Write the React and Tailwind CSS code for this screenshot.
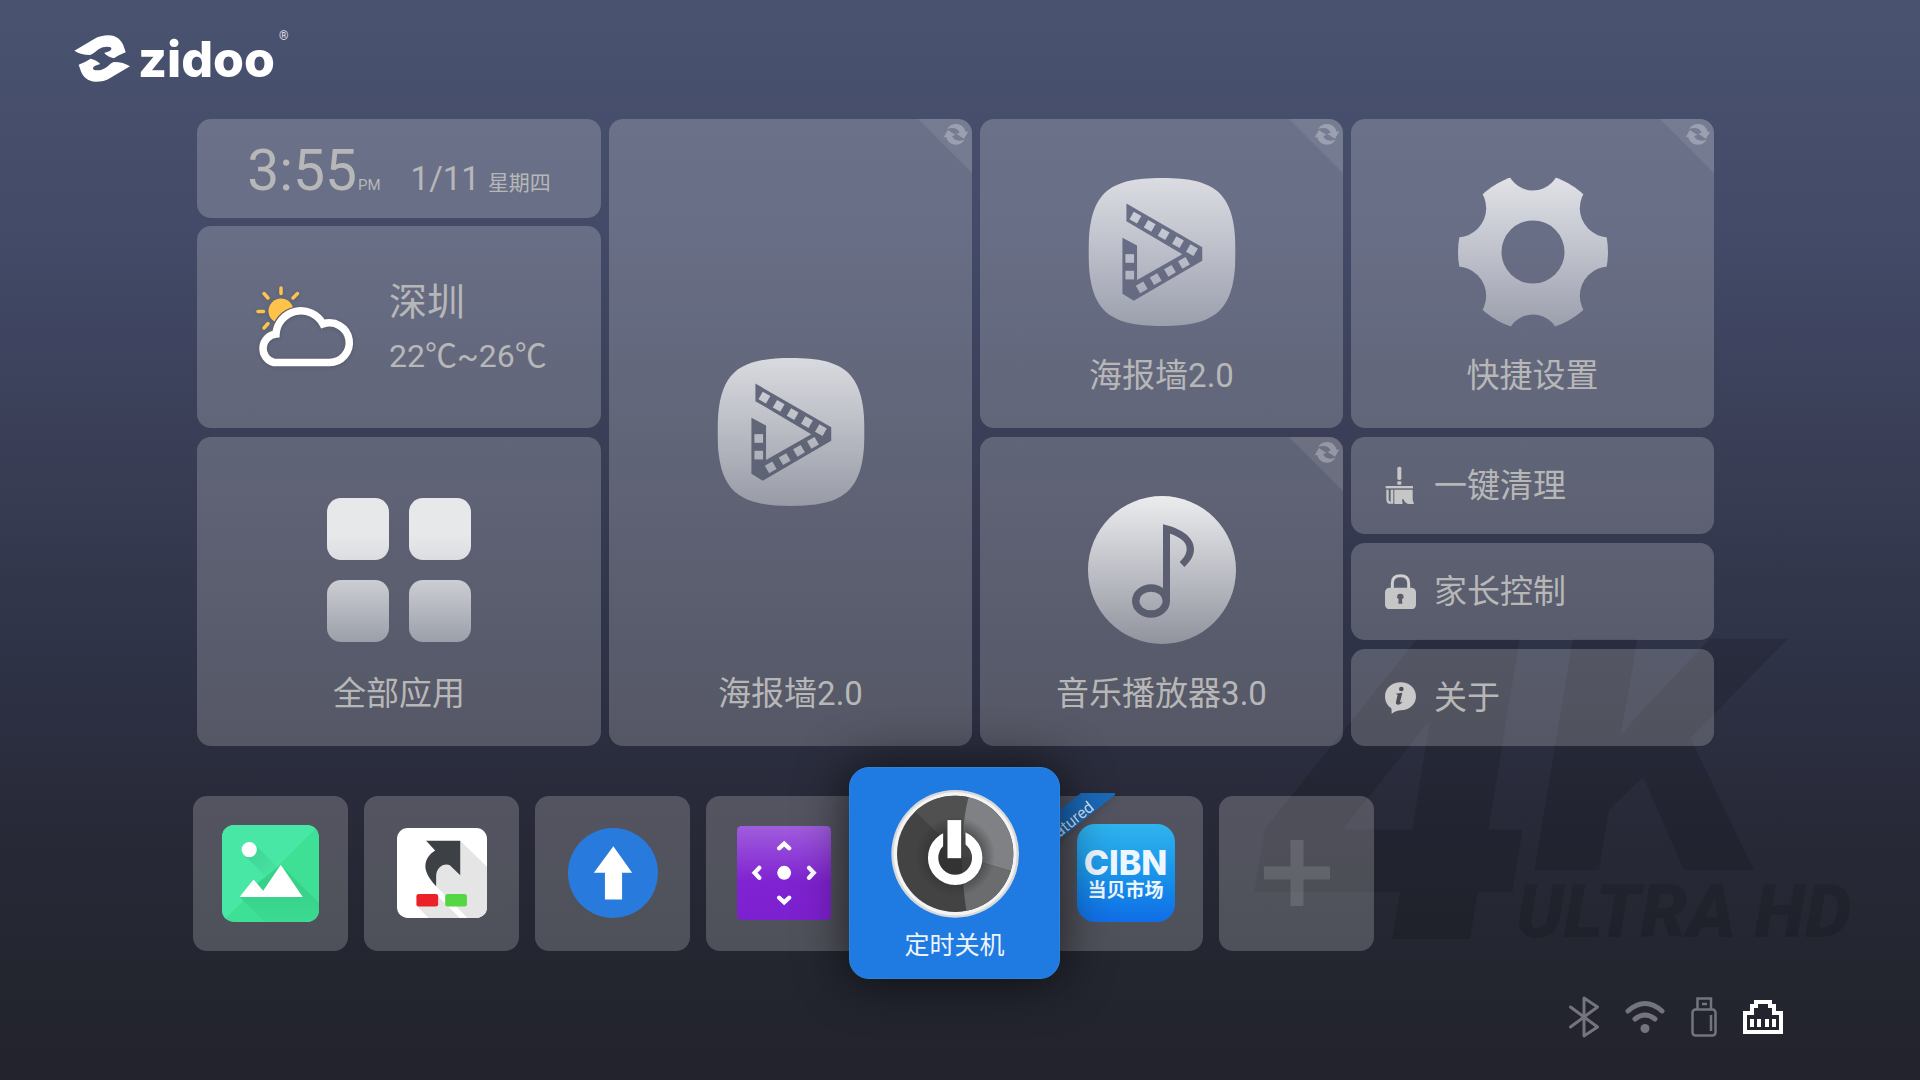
// App.jsx
import React, { useId } from 'react';

// Upper blade of the brand mark, the lower one is the same shape turned by 180deg
const BLADE = 'M41 90 L95 56 C108 47 122 44 136 44 C158 44 174 58 180 82 L184 95 L165 104 L151 113 Q136 110 124 97 L138 92 Q148 86 142 80 Q134 76 120 80 C102 86 96 102 84 103 Q60 103 41 90 Z';

const ZidooLogo = () => (
  <div className="flex items-start text-white">
    <svg className="mt-[15px] h-[47px] w-[56px]" viewBox="40 43 156 141" preserveAspectRatio="none" fill="currentColor" aria-hidden="true">
      <path d={BLADE} />
      <path d={BLADE} transform="rotate(180 118.5 113.5)" />
    </svg>
    <span className="ml-2 mt-[14px] font-[Inter,sans-serif] text-[50px] font-extrabold leading-[50px]">zidoo</span>
    <span className="ml-1 mt-2 text-xs leading-4 text-white/80">®</span>
  </div>
);

const Fade = ({ id, from, to }) => (
  <linearGradient id={id} x1="0" y1="0" x2="0" y2="1">
    <stop offset="0" stopColor="#fff" stopOpacity={from} />
    <stop offset="1" stopColor="#fff" stopOpacity={to} />
  </linearGradient>
);

const PosterIcon = () => {
  const id = useId();
  const upper = [[495, 322], [538, 347], [580, 372], [623, 396], [665, 420]];
  const lower = [[514, 532], [556, 507], [599, 482], [641, 458]];

  return (
    <svg className="size-[148px]" viewBox="353 203 444 445" aria-hidden="true">
      <defs>
        <Fade id={`${id}f`} from={0.76} to={0.36} />
        <mask id={`${id}m`} maskUnits="userSpaceOnUse" x="353" y="203" width="444" height="445">
          <rect x="353" y="203" width="444" height="445" fill="#fff" />
          <path d="M468 280 L696 411 V452 L490 572 L456 551 V383 L500 406 V510 L636 432 L468 333 Z" fill="#000" />
          {upper.map(([x, y]) => (
            <rect key={x} x={x - 13} y={y - 13} width="26" height="26" fill="#fff" transform={`rotate(30 ${x} ${y})`} />
          ))}
          {lower.map(([x, y]) => (
            <rect key={x} x={x - 13} y={y - 13} width="26" height="26" fill="#fff" transform={`rotate(-30 ${x} ${y})`} />
          ))}
          <rect x="465" y="432" width="26" height="26" fill="#fff" />
          <rect x="465" y="482" width="26" height="26" fill="#fff" />
        </mask>
      </defs>
      <path
        d="M575 203 C740 203 796 250 796 425 C796 600 740 648 575 648 C410 648 354 600 354 425 C354 250 410 203 575 203 Z"
        fill={`url(#${id}f)`}
        mask={`url(#${id}m)`}
      />
    </svg>
  );
};

const GearIcon = () => {
  const sides = [[347, 294], [805, 294], [347, 558], [805, 558]];

  return (
    <svg className="size-[150px]" viewBox="350 200 452 452" aria-hidden="true">
      <defs>
        <Fade id="gearFade" from={0.8} to={0.36} />
        <mask id="gearMask" maskUnits="userSpaceOnUse" x="350" y="200" width="452" height="452">
          <ellipse cx="576" cy="426" rx="226" ry="235" fill="#fff" />
          <circle cx="576" cy="426" r="95" fill="#000" />
          <circle cx="576" cy="161" r="80" fill="#000" />
          <circle cx="576" cy="693" r="79" fill="#000" />
          {sides.map(([x, y]) => (
            <circle key={`${x}-${y}`} cx={x} cy={y} r="88" fill="#000" />
          ))}
        </mask>
      </defs>
      <rect x="350" y="200" width="452" height="452" fill="url(#gearFade)" mask="url(#gearMask)" />
    </svg>
  );
};

const MusicIcon = () => (
  <svg className="size-[148px]" viewBox="351 197 444 444" aria-hidden="true">
    <defs>
      <Fade id="musicFade" from={0.88} to={0.34} />
      <mask id="musicMask" maskUnits="userSpaceOnUse" x="351" y="197" width="444" height="444">
        <rect x="351" y="197" width="444" height="444" fill="#fff" />
        <path d="M576 282 C620 292 669 315 669 357 C669 380 655 396 640 410 L626 395 C638 382 647 372 647 355 C647 332 622 318 597 310 V512 H576 Z" fill="#000" />
        <ellipse cx="540" cy="512" rx="46" ry="39" fill="none" stroke="#000" strokeWidth="22" />
      </mask>
    </defs>
    <circle cx="573" cy="419" r="222" fill="url(#musicFade)" mask="url(#musicMask)" />
  </svg>
);

const AllAppsIcon = () => (
  <div className="grid grid-cols-2 gap-5">
    <span className="size-[62px] rounded-[14px] bg-linear-to-b from-[#e7e8ea] from-60% to-[#dcdde1]" />
    <span className="size-[62px] rounded-[14px] bg-linear-to-b from-[#e7e8ea] from-60% to-[#dcdde1]" />
    <span className="size-[62px] rounded-[14px] bg-linear-to-b from-[#cdced3] to-[#9b9fa9]" />
    <span className="size-[62px] rounded-[14px] bg-linear-to-b from-[#cdced3] to-[#9b9fa9]" />
  </div>
);

const WeatherIcon = () => {
  const cloud = 'M18 76.5 A14.5 14.5 0 0 1 20 48 A25 25 0 0 1 67 38 A19.8 19.8 0 1 1 73 76.5 Z';

  return (
    <svg className="h-[82px] w-[97px] overflow-visible drop-shadow-sm" viewBox="0 0 97 82" fill="none" aria-hidden="true">
      <mask id="sunMask" maskUnits="userSpaceOnUse" x="-5" y="-5" width="60" height="60">
        <rect x="-5" y="-5" width="60" height="60" fill="#fff" />
        <path d={cloud} fill="#000" stroke="#000" strokeWidth="10" />
      </mask>
      <circle cx="25" cy="25" r="12.5" fill="#ffc34a" mask="url(#sunMask)" />
      <path d="M25 2 V7.500 M41.500 7.500 L37 12 M8 7.500 L12 12 M2 25.500 H7.500 M8 42 L12 37.500" stroke="#ffc34a" strokeWidth="3.500" strokeLinecap="round" />
      <path d={cloud} stroke="#fff" strokeWidth="7.500" />
    </svg>
  );
};

const SyncCorner = () => {
  const arrow = 'M1045 54 C1056 34 1092 32 1100 62 L1108 61 L1095 83 L1072 68 L1082 65 C1078 53 1064 47 1045 54 Z';

  return (
    <svg className="absolute right-0 top-0 size-[54px]" viewBox="958 24 161 161" fill="#fff" aria-hidden="true">
      <path d="M958 24 H1119 V185 Z" fillOpacity="0.08" />
      <g fillOpacity="0.28">
        <path d={arrow} />
        <path d={arrow} transform="rotate(180 1071 70)" />
      </g>
    </svg>
  );
};

const BroomIcon = () => (
  <svg className="w-[31px]" viewBox="135 105 93 118" fill="#c6c6c6" aria-hidden="true">
    <rect x="172" y="107" width="12" height="40" rx="5" />
    <rect x="172" y="151" width="12" height="10" rx="3" />
    <rect x="137" y="165" width="82" height="7" />
    <path d="M139 176 H146 V206 Q148 213 152 212 V176 H160 V218 H146 Q138 214 139 200 Z M163 176 H218 V206 L222 219 H204 Q192 214 191 204 L186 206 L188 219 H163 Z" />
  </svg>
);

const LockIcon = () => (
  <svg className="w-[31px]" viewBox="135 425 93 107" aria-hidden="true">
    <path d="M157 470 V452 Q157 430 181 430 Q206 430 206 452 V470" fill="none" stroke="#cfcfcf" strokeWidth="9" />
    <rect x="135" y="466" width="93" height="65" rx="14" fill="#c6c6c6" />
    <path d="M181 484 a9 9 0 0 1 5 17 l1 13 h-12 l1 -13 a9 9 0 0 1 5 -17 Z" fill="#5a5c6a" />
  </svg>
);

const InfoIcon = () => (
  <svg className="w-[31px]" viewBox="135 752 93 96" aria-hidden="true">
    <path d="M182 753 C208 753 228 771 228 795 C228 820 208 837 182 837 Q172 837 155 847 Q155 838 154 831 C142 823 135 811 135 795 C135 771 156 753 182 753 Z" fill="#c9c9c9" />
    <circle cx="184" cy="773" r="7" fill="#4c4e59" />
    <path d="M167 787 L187 784 L180 813 Q183 814 187 810 Q184 820 175 820 Q166 820 168 811 L173 791 Z" fill="#4c4e59" />
  </svg>
);

const GalleryIcon = () => (
  <svg className="size-[97px]" viewBox="124 135 292 292" aria-hidden="true">
    <defs>
      <clipPath id="galleryClip">
        <rect x="124" y="135" width="292" height="292" rx="36" />
      </clipPath>
      <linearGradient id="galleryDot" x1="0" y1="0" x2="1" y2="1">
        <stop offset="0" stopColor="#3fcf92" />
        <stop offset="1" stopColor="#47e6a3" />
      </linearGradient>
      <linearGradient id="galleryHill" x1="0" y1="0" x2="0" y2="1">
        <stop offset="0.400" stopColor="#38d18a" />
        <stop offset="1" stopColor="#3cdb91" />
      </linearGradient>
    </defs>
    <g clipPath="url(#galleryClip)">
      <rect x="124" y="135" width="292" height="292" fill="#3ee095" />
      <path d="M124 135 H416 L124 427 Z" fill="#48e7a5" />
      <path d="M222 193 L292 263 L262 295 L190 225 Z" fill="url(#galleryDot)" />
      <path d="M177 352 L252 427 H416 V370 L301 255 Z" fill="url(#galleryHill)" />
    </g>
    <circle cx="206" cy="209" r="23" fill="#fff" />
    <path d="M177 352 L219 299 L248 333 L301 255 L367 352 Z" fill="#fff" />
  </svg>
);

const ShortcutIcon = () => (
  <svg className="size-[90px]" viewBox="648 146 269 269" aria-hidden="true">
    <clipPath id="shortcutClip">
      <rect x="648" y="146" width="269" height="269" rx="32" />
    </clipPath>
    <g clipPath="url(#shortcutClip)">
      <rect x="648" y="146" width="269" height="269" fill="#fff" />
      <path d="M837 184 L917 262 V415 H859 L765 320 V250 Z M706 378 L742 415 H836 L771 350 Z" fill="#e5e5e5" />
    </g>
    <path d="M735 184 H837 V287 L806 257 C785 250 765 266 765 290 V320 C742 296 731 274 733 255 C735 236 748 222 762 213 Z" fill="#3d4146" />
    <rect x="706" y="343" width="65" height="38" rx="7" fill="#ea2227" />
    <rect x="792" y="343" width="65" height="38" rx="7" fill="#55d745" />
  </svg>
);

const UploadIcon = () => (
  <svg className="size-[90px]" viewBox="1162 144 268 268" aria-hidden="true">
    <circle cx="1296" cy="278" r="134" fill="#287bdd" />
    <path d="M1297 198 L1353 277 H1323 V357 H1272 V277 H1239 Z" fill="#fff" />
  </svg>
);

const DpadIcon = () => (
  <svg className="size-[94px]" viewBox="137 231 283 283" aria-hidden="true">
    <linearGradient id="dpadFade" x1="0" y1="0" x2="0" y2="1">
      <stop offset="0" stopColor="#a05ddd" />
      <stop offset="0.600" stopColor="#7f22d1" />
      <stop offset="1" stopColor="#7d20cf" />
    </linearGradient>
    <rect x="137" y="231" width="283" height="283" rx="14" fill="url(#dpadFade)" />
    <circle cx="279" cy="372" r="21" fill="#fff" />
    <path d="M264 298 L279 284 L294 298 M264 447 L279 461 L294 447 M204 357 L190 372 L204 387 M354 357 L368 372 L354 387" fill="none" stroke="#fff" strokeWidth="13" strokeLinecap="round" />
  </svg>
);

const PowerIcon = () => (
  <svg className="size-[128px]" viewBox="603 120 383 383" aria-hidden="true">
    <defs>
      <clipPath id="powerFace">
        <circle cx="795" cy="311" r="174" />
      </clipPath>
      <clipPath id="powerGap">
        <path d="M690 220 H759 V300 H826 V220 H900 V420 H690 Z" />
      </clipPath>
      <radialGradient id="powerShade" gradientUnits="userSpaceOnUse" cx="795" cy="318" r="120">
        <stop offset="0.500" stopColor="#2e2e2e" stopOpacity="0.75" />
        <stop offset="1" stopColor="#2e2e2e" stopOpacity="0" />
      </radialGradient>
    </defs>
    <circle cx="795" cy="311" r="191" fill="#d9d9d9" />
    <circle cx="795" cy="311" r="184" fill="#f4f4f4" />
    <g clipPath="url(#powerFace)">
      <rect x="603" y="120" width="383" height="383" fill="#434344" />
      <path d="M815 318 L650 160 L700 120 H838 Z" fill="#505051" />
      <path d="M815 318 Q815 210 840 120 H986 V370 Z" fill="#7f8184" />
      <path d="M815 318 L986 370 V503 H832 Q816 410 815 318 Z" fill="#6b6c6e" />
      <circle cx="795" cy="318" r="120" fill="url(#powerShade)" />
    </g>
    <circle cx="795" cy="323" r="66" fill="none" stroke="#fff" strokeWidth="31" clipPath="url(#powerGap)" />
    <rect x="772" y="210" width="41" height="114" fill="#fff" />
  </svg>
);

const CibnIcon = () => (
  <div className="flex size-[98px] flex-col items-center justify-center rounded-[18px] bg-linear-to-b from-[#2fb4ee] via-[#1a94ea] to-[#126de6] pt-1 text-[#eef7ff]">
    <span className="font-[Inter,sans-serif] text-[34px] font-extrabold leading-8">CIBN</span>
    <span className="text-[19px] font-bold leading-6">当贝市场</span>
  </div>
);

const FeaturedRibbon = () => (
  <svg className="absolute -left-[3px] -top-[3px] h-[64px] w-[70px] drop-shadow-md" viewBox="0 0 70 64" aria-hidden="true">
    <path d="M36 0 H70 V2 L0 58 V28 Z" fill="#1a69b8" />
    <text x="50" y="16" transform="rotate(-39 50 16)" textAnchor="end" fontFamily="'Liberation Sans Narrow', Roboto, sans-serif" fontSize="16" fill="#d5e4f4">Featured</text>
  </svg>
);

const PlusIcon = () => (
  <svg className="size-[66px]" viewBox="0 0 66 66" fill="#fff" fillOpacity="0.12" aria-hidden="true">
    <path d="M26.500 0 H39.500 V26.500 H66 V39.500 H39.500 V66 H26.500 V39.500 H0 V26.500 H26.500 Z" />
  </svg>
);

const Watermark = () => (
  <svg className="absolute bottom-0 right-0 h-[480px] w-[720px]" viewBox="1200 600 720 480" aria-hidden="true">
    <g opacity="0.12" fontFamily="Inter, sans-serif" fontStyle="italic" fontWeight="900">
      <text x="1248" y="939" fontSize="412">4</text>
      <text x="1534" y="870" fontSize="318">K</text>
      <text x="1516" y="937" fontSize="74" fontFamily="Roboto, sans-serif">ULTRA HD</text>
    </g>
  </svg>
);

const StatusBar = () => (
  <footer className="mt-[17px] flex items-center justify-end gap-[26px] pr-[137px] text-[#73747d]">
    <svg className="h-[42px] w-[30px]" viewBox="1 0 30 42" fill="none" stroke="currentColor" strokeWidth="3" strokeLinejoin="round" strokeLinecap="round" aria-label="蓝牙">
      <path d="M2.500 11 L29.500 31 L16 40 V2 L29.500 11 L2.500 31" />
    </svg>
    <svg className="h-[34px] w-10" viewBox="0 0 40 34" fill="none" stroke="currentColor" strokeWidth="5" strokeLinecap="round" aria-label="Wi-Fi">
      <path d="M3 11 Q20 -4 37 11" />
      <path d="M10 19 Q20 11 30 19" />
      <circle cx="20" cy="28.500" r="4.500" fill="currentColor" stroke="none" />
    </svg>
    <svg className="h-[40px] w-[26px]" viewBox="0 0 26 40" fill="none" stroke="currentColor" strokeWidth="2.500" aria-label="USB">
      <path d="M6.500 12 V1.500 H20 V12" />
      <path d="M11 7 H16" />
      <rect x="1.500" y="12.500" width="23" height="26" rx="3" />
      <path d="M20 18 V34" />
    </svg>
    <svg className="h-[34px] w-10 text-white" viewBox="0 0 40 34" fill="none" stroke="currentColor" strokeWidth="4" aria-label="以太网">
      <path d="M2 32 V13 H9 V6 H13 V2 H27 V6 H31 V13 H38 V32 Z" />
      <path d="M9 19 V27 M16 19 V27 M24 19 V27 M31 19 V27" />
    </svg>
  </footer>
);

const Tile = ({ label, tall = false, sync = true, className = '', children }) => (
  <button type="button" className={`relative flex flex-col items-center overflow-hidden rounded-[14px] bg-white/20 ${tall ? 'pt-[75px]' : 'pt-8'} ${className}`}>
    {sync && <SyncCorner />}
    <span className="flex flex-1 items-center">{children}</span>
    <span className="pb-7 text-[33px] leading-[48px]">{label}</span>
  </button>
);

const menuItems = [
  { label: '一键清理', icon: <BroomIcon /> },
  { label: '家长控制', icon: <LockIcon /> },
  { label: '关于', icon: <InfoIcon /> },
];

const AppCard = ({ label, children }) => (
  <button type="button" aria-label={label} className="relative flex size-[155px] items-center justify-center rounded-[14px] bg-white/20">
    {children}
  </button>
);

const App = () => {
  return (
    <div className="relative flex min-h-screen flex-col overflow-hidden bg-[linear-gradient(180deg,#49526f_0%,#434b69_20%,#3a3f57_40%,#2f3347_60%,#282a39_75%,#23252f_90%,#22232d_100%)] font-[Roboto,'Noto_Sans_CJK_SC',sans-serif] text-[#b7b7b7]">
      <Watermark />

      <header className="relative h-[119px] pl-[74px] pt-5">
        <ZidooLogo />
      </header>

      {/* Main tiles */}
      <main className="relative grid grid-cols-[404fr_363fr_363fr_363fr] grid-rows-[309px_309px] gap-x-2 gap-y-[9px] pl-[197px] pr-[206px]">
        <div className="flex flex-col gap-2">
          <div className="flex h-[99px] items-baseline justify-center rounded-[14px] bg-white/20 pt-[18px]">
            <span className="text-[57px] leading-[68px]">3:55</span>
            <span className="ml-px text-[15px]">PM</span>
            <span className="ml-[30px] text-[33px]">1/11</span>
            <span className="ml-2 text-[21px]">星期四</span>
          </div>
          <button type="button" className="flex flex-1 items-center gap-9 rounded-[14px] bg-white/20 pl-[59px] text-left">
            <WeatherIcon />
            <span className="flex flex-col pt-1">
              <span className="text-[38px] leading-[54px]">深圳</span>
              <span className="text-[32px] leading-[54px]">22℃~26℃</span>
            </span>
          </button>
        </div>

        <Tile label="海报墙2.0" tall className="row-span-2">
          <PosterIcon />
        </Tile>
        <Tile label="海报墙2.0">
          <PosterIcon />
        </Tile>
        <Tile label="快捷设置">
          <GearIcon />
        </Tile>
        <Tile label="全部应用" sync={false}>
          <AllAppsIcon />
        </Tile>
        <Tile label="音乐播放器3.0">
          <MusicIcon />
        </Tile>

        <div className="flex flex-col gap-[9px]">
          {menuItems.map((item) => (
            <button key={item.label} type="button" className="flex flex-1 items-center gap-[18px] rounded-[14px] bg-white/20 pl-[34px] text-[33px]">
              {item.icon}
              {item.label}
            </button>
          ))}
        </div>
      </main>

      {/* Shortcut row, the focused app grows over its neighbours */}
      <nav className="relative mt-[21px] flex items-center gap-4 pl-[193px]">
        <AppCard label="图库"><GalleryIcon /></AppCard>
        <AppCard label="快捷方式"><ShortcutIcon /></AppCard>
        <AppCard label="升级"><UploadIcon /></AppCard>
        <AppCard label="遥控器"><DpadIcon /></AppCard>
        <button type="button" className="z-10 -mx-7 flex h-[212px] w-[211px] flex-col items-center rounded-[20px] border border-[#2a86dc] bg-[#1f7ae2] pt-[22px] text-[25px] leading-9 text-[#edf4fc] shadow-[0_0_50px_rgba(0,0,0,0.65)]">
          <PowerIcon />
          <span className="mt-[10px]">定时关机</span>
        </button>
        <AppCard label="当贝市场">
          <CibnIcon />
          <FeaturedRibbon />
        </AppCard>
        <AppCard label="添加"><PlusIcon /></AppCard>
      </nav>

      <StatusBar />
    </div>
  );
};

export default App;
